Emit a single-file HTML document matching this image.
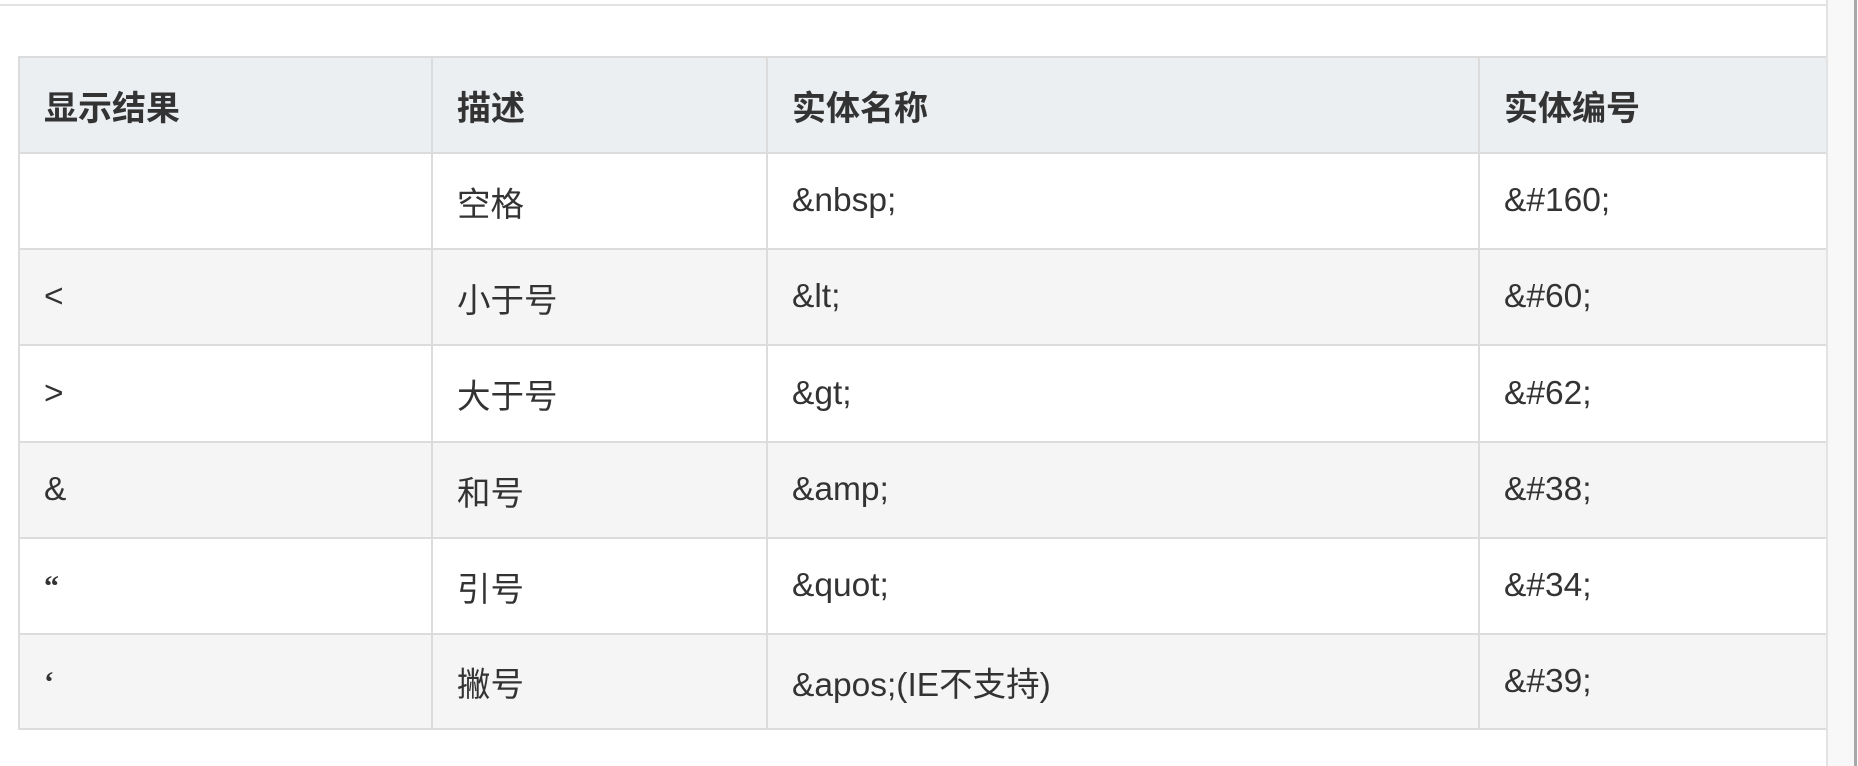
<!DOCTYPE html>
<html><head><meta charset="utf-8"><style>
html,body{margin:0;padding:0;background:#fff;width:1858px;height:766px;overflow:hidden;font-family:"Liberation Sans","Noto Sans CJK SC",sans-serif;color:#333}
.topline{position:absolute;left:0;top:4px;width:1826px;height:2px;background:#e3e3e3}
.sb{position:absolute;left:1826px;top:0;width:32px;height:766px;background:#f8f8f8;border-left:2px solid #e3e3e3;box-sizing:border-box}
.sb2{position:absolute;left:1854px;top:0;width:3px;height:766px;background:#a8a8a8}
table{position:absolute;left:18px;top:56px;border-collapse:collapse;font-size:33.5px}
td,th{border:2px solid #dcdcdc;padding:0 0 0 24px;text-align:left;height:92px;box-sizing:border-box;white-space:nowrap}
th{background:#eceff2;font-weight:bold;height:96px;font-size:34px}
tr.g td{background:#f5f5f5}
.q{font-family:"Liberation Serif",serif;font-weight:bold;font-size:30px}
</style></head><body>
<div class="topline"></div>
<table>
<tr><th style="width:413px">显示结果</th><th style="width:335px">描述</th><th style="width:712px">实体名称</th><th style="width:349px">实体编号</th></tr>
<tr style="height:96px"><td></td><td>空格</td><td>&amp;nbsp;</td><td>&amp;#160;</td></tr>
<tr class="g" style="height:96px"><td>&lt;</td><td>小于号</td><td>&amp;lt;</td><td>&amp;#60;</td></tr>
<tr style="height:97px"><td>&gt;</td><td>大于号</td><td>&amp;gt;</td><td>&amp;#62;</td></tr>
<tr class="g" style="height:96px"><td>&amp;</td><td>和号</td><td>&amp;amp;</td><td>&amp;#38;</td></tr>
<tr style="height:96px"><td><span class="q">“</span></td><td>引号</td><td>&amp;quot;</td><td>&amp;#34;</td></tr>
<tr class="g" style="height:95px"><td><span class="q">‘</span></td><td>撇号</td><td>&amp;apos;(IE不支持)</td><td>&amp;#39;</td></tr>
</table>
<div class="sb"></div><div class="sb2"></div>
</body></html>
